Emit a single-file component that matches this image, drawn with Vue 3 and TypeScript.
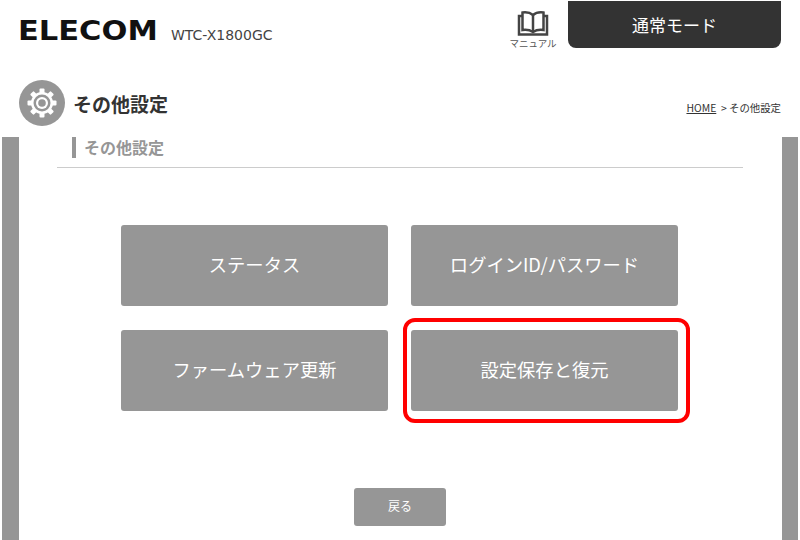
<script setup lang="ts">
const tiles: { label: string; hot?: boolean }[] = [
  { label: 'ステータス' },
  { label: 'ログインID/パスワード' },
  { label: 'ファームウェア更新' },
  { label: '設定保存と復元', hot: true },
]
</script>

<template>
  <div class="page">
    <header class="header">
      <div class="brand">
        <span class="logo">ELECOM</span>
        <span class="model">WTC-X1800GC</span>
      </div>
      <div class="manual">
        <svg width="32" height="26" viewBox="0 0 32 26" fill="none" stroke="#444" stroke-width="2.500">
          <path d="M16 5C13 2.500 9 2 5.500 2.500V20C9 19.500 13 20 16 22C19 20 23 19.500 26.500 20V2.500C23 2 19 2.500 16 5Z" />
          <path d="M16 5V22" />
          <path d="M5.500 6H2V24.500H30V6H26.500" />
        </svg>
        <span>マニュアル</span>
      </div>
      <div class="mode">通常モード</div>
    </header>

    <div class="titlebar">
      <div class="title">
        <span class="gear">
          <svg width="36" height="36" viewBox="0 0 36 36">
            <g fill="#fff">
              <rect v-for="a in [0, 45, 90, 135, 180, 225, 270, 315]" :key="a" x="15.500" y="3.500" width="5" height="6" rx="1" :transform="`rotate(${a} 18 18)`" />
            </g>
            <circle cx="18" cy="18" r="11" fill="#fff" />
            <circle cx="18" cy="18" r="8.500" fill="#969696" />
            <circle cx="18" cy="18" r="6" fill="#fff" />
            <circle cx="18" cy="18" r="3.800" fill="#969696" />
          </svg>
        </span>
        <h1>その他設定</h1>
      </div>
      <div class="crumbs"><a>HOME</a> &nbsp;&gt; その他設定</div>
    </div>

    <div class="frame">
      <main class="panel">
        <h2>その他設定</h2>
        <div class="grid">
          <button v-for="t in tiles" :key="t.label" class="tile" :class="{ hot: t.hot }">{{ t.label }}</button>
        </div>
        <button class="back">戻る</button>
      </main>
    </div>
  </div>
</template>

<style scoped>
.page {
  width: 800px;
  height: 540px;
  overflow: hidden;
  background: #fff;
  font-family: "Noto Sans CJK JP", "Noto Sans", sans-serif;
  color: #333;
}
.header {
  display: flex;
  align-items: flex-start;
  height: 49px;
  padding: 1px 19px 0 18px;
  box-sizing: border-box;
}
.brand {
  display: flex;
  align-items: baseline;
  flex: 1;
  padding-top: 13px;
}
.logo {
  font-family: "DejaVu Sans", sans-serif;
  font-weight: 700;
  font-size: 27px;
  line-height: 34px;
  color: #111;
  display: inline-block;
  width: 139px;
  margin-right: 14px;
  white-space: nowrap;
  transform: scaleX(1.13);
  transform-origin: left;
}
.model {
  font-family: "DejaVu Sans", sans-serif;
  font-size: 14px;
  color: #444;
}
.manual {
  width: 50px;
  margin-right: 10px;
  padding-top: 9px;
  display: flex;
  flex-direction: column;
  align-items: center;
  font-size: 9.500px;
  line-height: 12px;
  color: #555;
}
.manual svg { display: block; margin-bottom: 1px; }
.mode {
  width: 213px;
  height: 47px;
  background: #333;
  color: #fff;
  border-radius: 0 0 8px 8px;
  font-size: 17px;
  display: flex;
  align-items: center;
  justify-content: center;
  box-sizing: border-box;
}
.titlebar {
  display: flex;
  justify-content: space-between;
  align-items: center;
  height: 88px;
  padding: 0 19px;
  box-sizing: border-box;
}
.title { display: flex; align-items: center; gap: 8px; padding-top: 20px; }
.gear {
  width: 46px;
  height: 46px;
  border-radius: 50%;
  background: #969696;
  display: flex;
  align-items: center;
  justify-content: center;
}
h1 {
  margin: 1px 0 0;
  font-size: 19px;
  font-weight: 700;
  color: #333;
}
.crumbs {
  font-size: 10.400px;
  color: #333;
  padding-top: 28px;
}
.crumbs a { text-decoration: underline; }
.frame {
  margin: 0 2px;
  height: 403px;
  background: #969696;
  padding: 0 16px 0 17px;
}
.panel {
  background: #fff;
  height: 100%;
  padding: 0 39px 0 38px;
  box-sizing: border-box;
  display: flex;
  flex-direction: column;
}
h2 {
  position: relative;
  margin: 0;
  height: 30px;
  padding: 0 0 0 27px;
  border-bottom: 1px solid #ccc;
  font-size: 16px;
  font-weight: 700;
  line-height: 20px;
  color: #969696;
}
h2::before {
  content: "";
  position: absolute;
  left: 15px;
  top: 0;
  width: 4px;
  height: 21px;
  background: #969696;
}
.grid {
  display: grid;
  grid-template-columns: 267px 267px;
  grid-auto-rows: 81px;
  gap: 24px 23px;
  margin: 57px 0 0 64px;
}
.tile {
  position: relative;
  border: 0;
  border-radius: 3px;
  background: #969696;
  color: #fff;
  font: 400 18.300px "Noto Sans CJK JP", sans-serif;
  padding: 0 0 3px;
}
.hot::after {
  content: "";
  position: absolute;
  inset: -12px -12px -12px -8px;
  border: 4.500px solid #f00;
  border-radius: 12px;
}
.back {
  align-self: flex-start;
  margin: 77px 0 0 297px;
  width: 92px;
  height: 38px;
  border: 0;
  border-radius: 3px;
  background: #969696;
  color: #fff;
  font: 400 12px "Noto Sans CJK JP", sans-serif;
  padding: 0 0 3px;
}
</style>
